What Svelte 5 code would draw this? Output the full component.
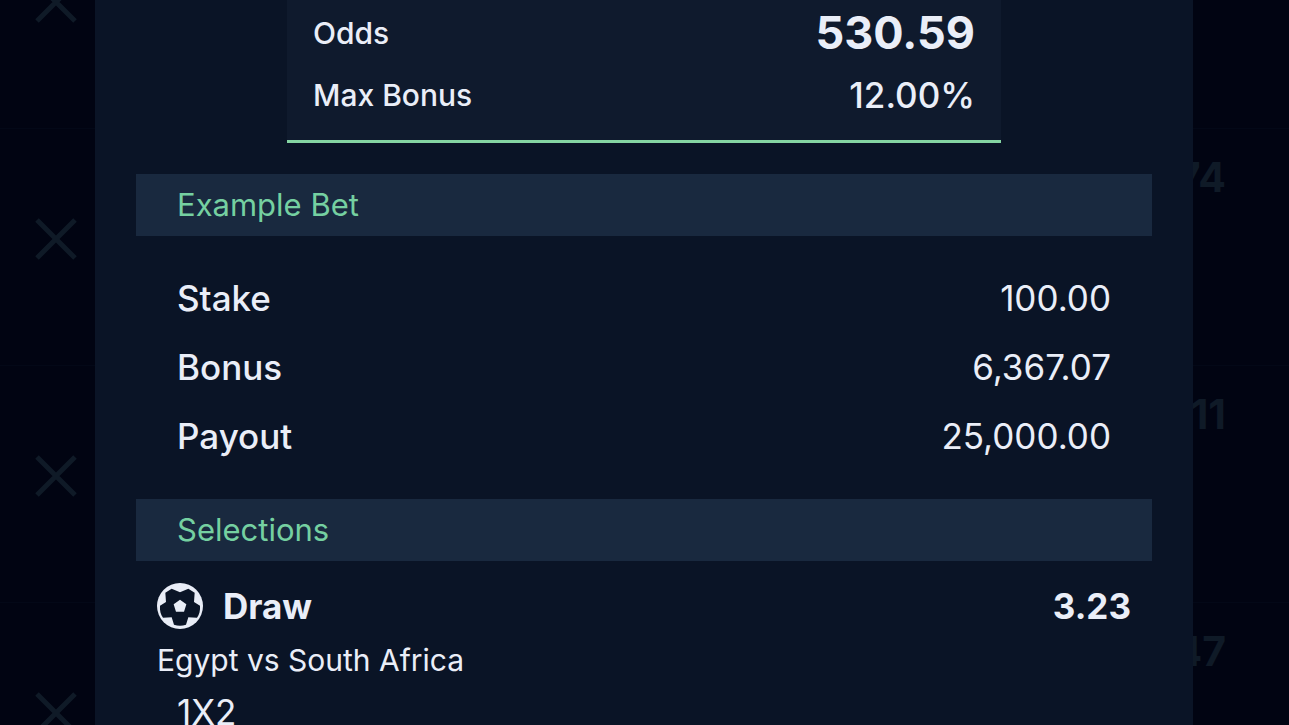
<script>
  const slipRows = ['', '74', '11', '47'];
  const summary = [
    { label: 'Odds', value: '530.59', strong: true },
    { label: 'Max Bonus', value: '12.00%', strong: false }
  ];
  const example = [
    { label: 'Stake', value: '100.00' },
    { label: 'Bonus', value: '6,367.07' },
    { label: 'Payout', value: '25,000.00' }
  ];
</script>

<div class="screen">
  <ul class="slip">
    {#each slipRows as odds}
      <li>
        <button type="button" aria-label="Remove">
          <svg viewBox="0 0 42 42" aria-hidden="true">
            <path d="M2 2 40 40M40 2 2 40" />
          </svg>
        </button>
        <strong>{odds}</strong>
      </li>
    {/each}
  </ul>

  <div class="dialog" role="dialog" aria-label="Max Bonus">
    <dl class="summary">
      {#each summary as item}
        <div>
          <dt>{item.label}</dt>
          <dd class:strong={item.strong}>{item.value}</dd>
        </div>
      {/each}
    </dl>

    <h2>Example Bet</h2>
    <dl class="example">
      {#each example as item}
        <div>
          <dt>{item.label}</dt>
          <dd>{item.value}</dd>
        </div>
      {/each}
    </dl>

    <h2>Selections</h2>
    <article>
      <header>
        <svg viewBox="-69 -69 138 138" aria-hidden="true">
          <circle class="light" r="69" />
          <path
            class="dark"
            d="M-44-40-25-52 0-41 25-52 44-40 42-12 60-1C61 14 58 26 51 35L25 34 18 56Q0 62-18 56L-25 34-51 35C-58 26-61 14-60-1L-42-12Z"
          />
          <path class="light" d="M0-19 19-5 12 17H-12L-19-5Z" />
        </svg>
        <h3>Draw</h3>
        <strong>3.23</strong>
      </header>
      <p class="match">Egypt vs South Africa</p>
      <p class="market">1X2</p>
    </article>
  </div>
</div>

<style>
  :global(body) {
    margin: 0;
    background: #010412;
  }

  .screen {
    position: relative;
    height: 100vh;
    overflow: hidden;
    background: #010412;
    color: #eaeef8;
    font-family: Inter, 'Noto Sans', sans-serif;
    font-size: 35px;
    line-height: 44px;
  }

  dl,
  dd,
  h2,
  h3,
  p,
  ul {
    margin: 0;
    padding: 0;
  }

  .slip {
    margin-top: -108px;
    list-style: none;
    color: #0f1a27;
  }

  .slip li {
    box-sizing: border-box;
    display: flex;
    align-items: flex-start;
    justify-content: space-between;
    height: 237px;
    padding: 26px 63px 0 28px;
    border-bottom: 1px solid #030817;
  }

  .slip strong {
    font-size: 41px;
  }

  .slip button {
    display: flex;
    margin-top: 56px;
    padding: 7px;
    border: 0;
    background: none;
    color: inherit;
  }

  .slip svg {
    width: 42px;
    height: 42px;
    fill: none;
    stroke: currentColor;
    stroke-width: 5;
  }

  .dialog {
    position: absolute;
    inset: 0 96px 0 95px;
    box-sizing: border-box;
    padding: 0 41px;
    overflow: hidden;
    background: #0a1426;
  }

  dl div {
    display: flex;
    align-items: center;
    justify-content: space-between;
  }

  .summary {
    margin: 0 151px 31px;
    padding: 2px 26px 14px;
    border-bottom: 3px solid #85d5a3;
    background: #0f1a2d;
  }

  .summary div {
    height: 62px;
  }

  .summary dt {
    font-size: 30px;
    font-weight: 500;
  }

  .summary dd {
    font-weight: 500;
  }

  .summary .strong {
    font-size: 45px;
    font-weight: 700;
  }

  h2 {
    padding: 9px 41px;
    background: #19293f;
    color: #75d0a1;
    font-size: 31px;
    font-weight: 400;
  }

  .example {
    padding: 27px 41px 29px;
  }

  .example div {
    height: 69px;
  }

  .example dt {
    font-weight: 500;
  }

  article {
    padding: 22px 21px;
  }

  header {
    display: flex;
    align-items: center;
    gap: 20px;
  }

  header svg {
    width: 46px;
    height: 46px;
  }

  .light {
    fill: #e9edf7;
  }

  .dark {
    fill: #0a1426;
  }

  h3 {
    flex: 1;
    font-size: 35px;
    font-weight: 700;
  }

  .match {
    margin: 9px 0 8px;
    font-size: 30px;
  }

  .market {
    padding-left: 20px;
  }
</style>
